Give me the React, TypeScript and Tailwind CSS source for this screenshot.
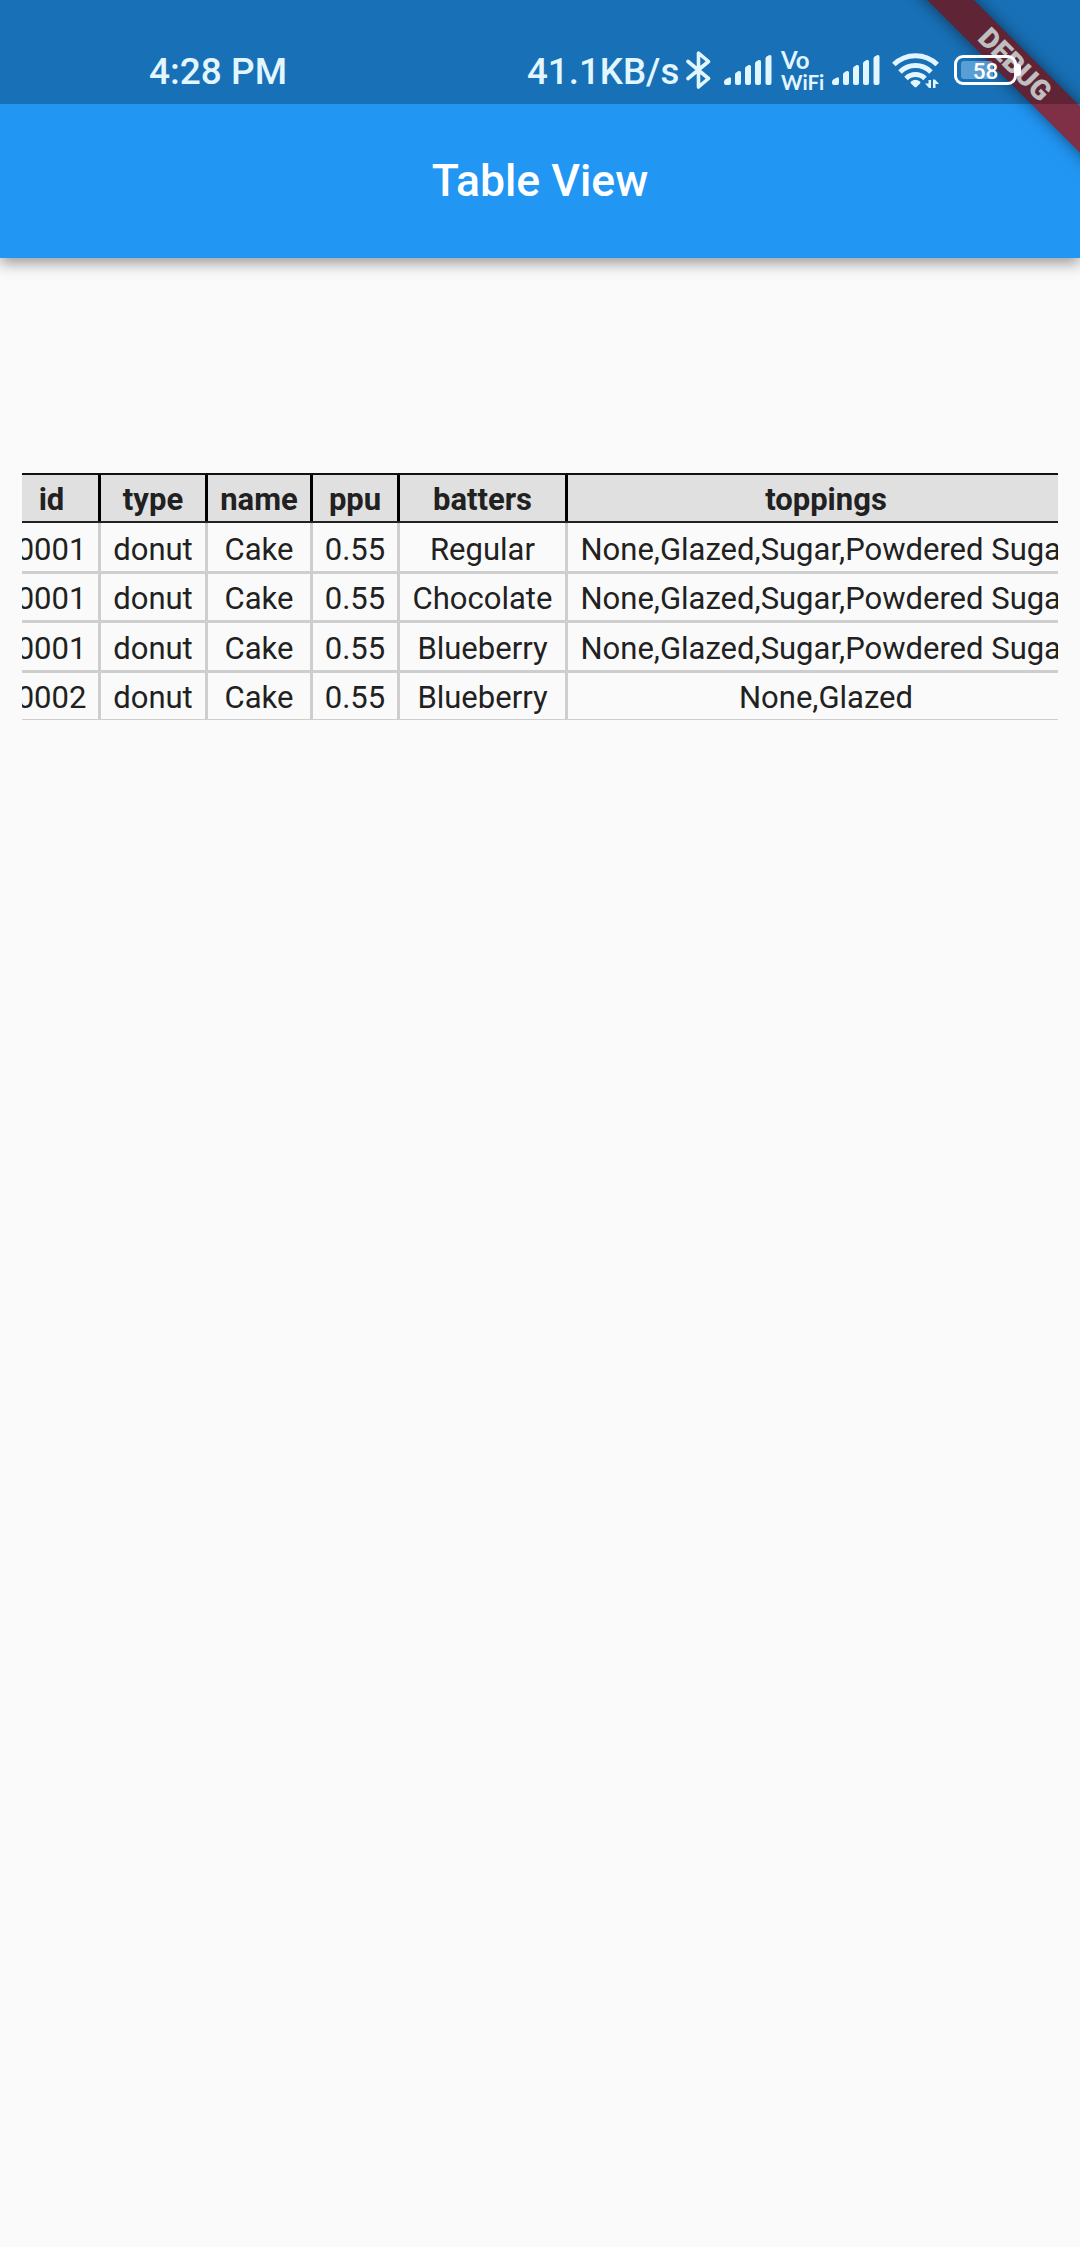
import React from 'react';

const columns = [
  { key: 'id', width: 'w-[99px] pl-[3px]' },
  { key: 'type', width: 'w-[107px]' },
  { key: 'name', width: 'w-[105px]' },
  { key: 'ppu', width: 'w-[87px]' },
  { key: 'batters', width: 'w-[168px]' },
  { key: 'toppings', width: 'w-[519px]' },
] as const;

const allToppings = 'None,Glazed,Sugar,Powdered Sugar';

const rows = [
  { id: '0001', type: 'donut', name: 'Cake', ppu: '0.55', batters: 'Regular', toppings: allToppings, height: 'h-[51px] pt-[5px]' },
  { id: '0001', type: 'donut', name: 'Cake', ppu: '0.55', batters: 'Chocolate', toppings: allToppings, height: 'h-[49px] pt-[4px]' },
  { id: '0001', type: 'donut', name: 'Cake', ppu: '0.55', batters: 'Blueberry', toppings: allToppings, height: 'h-[50px] pt-[4px]' },
  { id: '0002', type: 'donut', name: 'Cake', ppu: '0.55', batters: 'Blueberry', toppings: 'None,Glazed', height: 'h-[47px] pt-[3px]' },
];

function Signal() {
  return (
    <svg width="48" height="31" viewBox="0 0 48 31" fill="currentColor">
      <path d="M0 27q0-2 2-3l3-1.600q2-.8 2 1.600v3.500q0 2.500-2 2.500h-3q-2 0-2-2z" />
      <path d="M11 19.500q0-2 2-2.600l1.500-.8q2.500-.8 2.500 1.500v10.400q0 2-2 2h-2q-2 0-2-2z" />
      <path d="M21 13.500q0-2 2-2.600l1.500-.8q2.500-.8 2.500 1.500v16.400q0 2-2 2h-2q-2 0-2-2z" />
      <path d="M31 8.500q0-2 2-2.600l1.500-.8q2.500-.8 2.500 1.500v21.400q0 2-2 2h-2q-2 0-2-2z" />
      <path d="M41.500 3.500q0-2 2-2.600l1.500-.6q2.500-.8 2.500 1.500v26.200q0 2-2 2h-2q-2 0-2-2z" />
    </svg>
  );
}

function Bluetooth() {
  return (
    <svg width="26" height="42" viewBox="0 0 26 42" fill="none" stroke="currentColor" strokeWidth="3.600" strokeLinejoin="round" strokeLinecap="round">
      <path d="M2 11.500 22.500 28.500 12.500 37V3L22.500 11.500 2 28.500" />
    </svg>
  );
}

function Wifi() {
  return (
    <svg width="48" height="36" viewBox="0 0 48 36" fill="none">
      <g stroke="currentColor" strokeWidth="5">
        <path d="M1.800 11.500a31 31 0 0 1 43.400 0" />
        <path d="M8 19a22 22 0 0 1 31 0" />
        <path d="M14 25.500a13.500 13.500 0 0 1 19 0" />
      </g>
      <path d="M19 28.500q4.500-3.500 9 0q1 1 0 2l-3.500 3.500q-1 .8-2 0l-3.500-3.500q-1-1 0-2z" fill="currentColor" />
      <path d="M36.500 27h2.500v8h-2l-4-4.500h3.500zM41 35v-8.500h2l4 4.500h-3.500v4z" fill="currentColor" />
    </svg>
  );
}

function StatusBar() {
  return (
    <div className="relative h-[104px] bg-black/25 text-[#e2f6ff]">
      <div className="flex h-full items-start pl-[149px]">
        <span className="mt-[50px] w-[378px] whitespace-nowrap text-[37px] font-medium leading-[44px]">4:28 PM</span>
        <span className="mt-[50px] w-[159px] whitespace-nowrap text-[36.700px] font-medium leading-[44px]">41.1KB/s</span>
        <span className="mt-[50px]"><Bluetooth /></span>
        <span className="ml-[12px] mt-[55px]"><Signal /></span>
        <span className="ml-[9px] mt-[51px] flex w-[44px] flex-col font-['Lato'] font-bold">
          <span className="text-[24px] leading-[18px]">Vo</span>
          <span className="mt-[4px] text-[20.500px] leading-[18px]">WiFi</span>
        </span>
        <span className="ml-[7px] mt-[55px]"><Signal /></span>
        <span className="ml-[12px] mt-[53px]"><Wifi /></span>
        <span className="ml-[14px] mt-[55px] flex items-center">
          <span className="relative flex h-[30px] w-[63px] items-center justify-center rounded-[9px] border-[3px] border-white">
            <span className="absolute left-[4px] top-[3px] h-[18px] w-[32px] rounded-[3px] bg-[#8fc4ee]/55" />
            <span className="relative top-[1px] text-[22.500px] font-medium leading-[24px] text-white">58</span>
          </span>
          <span className="h-[12px] w-[4px] rounded-r-[3px] bg-white" />
        </span>
      </div>
    </div>
  );
}

function DebugBanner() {
  return (
    <div className="pointer-events-none absolute right-0 top-0 h-[220px] w-[220px] overflow-hidden">
      <div className="absolute left-[-10px] top-[48px] flex h-[33px] w-[330px] rotate-45 items-center justify-center bg-[#7f3047] text-[28px] font-black leading-[33px] text-white shadow-[0_0_16px_rgba(0,0,0,0.5)]">
        DEBUG
      </div>
    </div>
  );
}

export default function App() {
  return (
    <div className="h-[2247px] w-[1080px] overflow-hidden bg-[#fafafa] font-['Roboto',sans-serif]">
      <header className="relative h-[258px] bg-[#2196f3] shadow-[0_5px_14px_rgba(0,0,0,0.4)]">
        <DebugBanner />
        <StatusBar />
        <h1 className="pt-[50px] text-center text-[44.500px] font-medium leading-[54px] text-white">Table View</h1>
      </header>
      <main className="mx-[22px] mt-[215px] overflow-hidden text-[31px] text-[#212121]">
        <div className="ml-[-20px] w-[1085px]">
          <div className="flex h-[50px] border-y-2 border-t-[#111] border-b-[#222] bg-[#e0e0e0] font-bold">
            {columns.map((c) => (
              <div key={c.key} className={`${c.width} flex shrink-0 items-center justify-center border-r-3 border-black pt-[3px] leading-[43px]`}>
                {c.key}
              </div>
            ))}
          </div>
          {rows.map((row, i) => {
            const [height, inset] = row.height.split(' ');
            return (
              <div key={i} className={`flex border-b-3 border-[#cecece] last:border-b ${height}`}>
                {columns.map((c) => (
                  <div key={c.key} className={`${c.width} ${inset} flex shrink-0 items-center justify-center whitespace-nowrap border-r-3 border-[#cecece] leading-[40px]`}>
                    {row[c.key]}
                  </div>
                ))}
              </div>
            );
          })}
        </div>
      </main>
    </div>
  );
}
